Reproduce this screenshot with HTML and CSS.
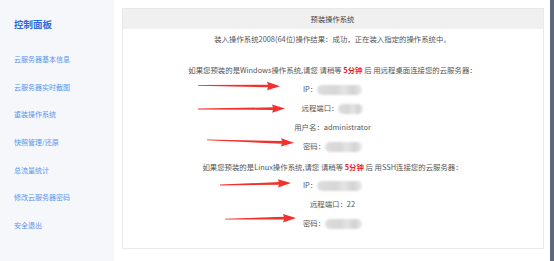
FILE: index.html
```html
<!DOCTYPE html>
<html lang="zh-CN">
<head>
    <meta charset="UTF-8">
    <title>预装操作系统</title>
    <link rel="stylesheet" href="styles.css">
</head>
<body>

    <div class="page">
        <div class="sidebar">
            <h2 class="side-title">控制面板</h2>
            <ul class="side-menu">
                <li><a href="#">云服务器基本信息</a></li>
                <li><a href="#">云服务器实时截图</a></li>
                <li><a href="#">重装操作系统</a></li>
                <li><a href="#">快照管理/还原</a></li>
                <li><a href="#">总流量统计</a></li>
                <li><a href="#">修改云服务器密码</a></li>
                <li><a href="#">安全退出</a></li>
            </ul>
        </div>

        <div class="main">
            <div class="panel">
                <div class="panel-head">预装操作系统</div>
                <div class="panel-body">
                    <p class="result">装入操作系统2008(64位)操作结果：成功，正在装入指定的操作系统中。</p>

                    <div class="os-block win">
                        <p>如果您预装的是Windows操作系统,请您 请稍等 <b class="hl">5分钟</b> 后 用远程桌面连接您的云服务器：</p>
                        <p>IP：<span class="mask ip"></span></p>
                        <p>远程端口：<span class="mask port"></span></p>
                        <p>用户名：administrator</p>
                        <p>密码：<span class="mask pwd"></span></p>
                    </div>

                    <div class="os-block linux">
                        <p class="os-intro">如果您预装的是Linux操作系统,请您 请稍等 <b class="hl">5分钟</b> 后 用SSH连接您的云服务器：</p>
                        <p>IP：<span class="mask ip"></span></p>
                        <p>远程端口：22</p>
                        <p>密码：<span class="mask pwd"></span></p>
                    </div>
                </div>
            </div>
        </div>

        <div class="frame-edge"></div>

        <!-- red arrows drawn over the screenshot -->
        <svg class="arrows" width="554" height="261" viewBox="0 0 554 261">
            <defs>
                <path id="arrow80" d="M0,-0.4 L70,-1.3 L69,-4.2 L82,0 L69,4.2 L70,1.3 L0,0.4 Z" />
                <path id="arrow86" d="M0,-0.4 L75,-1.3 L74,-4.2 L87,0 L74,4.2 L75,1.3 L0,0.4 Z" />
                <path id="arrow70" d="M0,-0.4 L59,-1.3 L58,-4.2 L71,0 L58,4.2 L59,1.3 L0,0.4 Z" />
            </defs>
            <use href="#arrow80" transform="translate(198,85.3) rotate(0.6)" />
            <use href="#arrow86" transform="translate(198,109) rotate(-0.3)" />
            <use href="#arrow86" transform="translate(207,139.8) rotate(2)" />
            <use href="#arrow70" transform="translate(220,185) rotate(-1.6)" />
            <use href="#arrow70" transform="translate(225,219.2) rotate(-1)" />
        </svg>
    </div>

</body>
</html>
```

FILE: styles.css
```css
* {
    margin: 0;
    padding: 0;
    box-sizing: border-box;
}

body {
    font-family: "Noto Sans CJK SC", "Noto Sans", sans-serif;
    background-color: #fff;
    color: #555;
}

.page {
    position: relative;
    display: flex;
    width: 554px;
    height: 261px;
    overflow: hidden;
}

.sidebar {
    width: 114px;
    flex: none;
    background-color: #f5f7fb;
    padding: 14px 0 0 14px;
}

    .side-title {
        font-size: 9.5px;
        line-height: 20px;
        font-weight: bold;
        color: #2a6ad4;
        margin-bottom: 8px;
    }

    .side-menu {
        list-style-type: none;
    }

        .side-menu li {
            height: 27.67px;
            line-height: 27.67px;
        }

            .side-menu li a {
                font-size: 7px;
                color: #5596ef;
                text-decoration: none;
            }

.main {
    flex: 1;
    padding: 8px 0 0 7.5px;
}

.panel {
    width: 422px;
    height: 241px;
    border: 1px solid #e9e9e9;
}

.panel-head {
    height: 20px;
    line-height: 20px;
    background-color: #f0f0f0;
    text-align: center;
    font-size: 7.3px;
    color: #444;
}

.panel-body {
    text-align: center;
    font-size: 7.4px;
}

    .panel-body p {
        line-height: 19px;
    }

.result {
    margin-bottom: 12px;
}

.os-block.linux {
    margin-top: 3px;
}

    .os-block.linux .os-intro {
        line-height: 17px;
    }

.hl {
    color: #f41a1a;
    font-weight: bold;
}

.mask {
    display: inline-block;
    height: 10px;
    vertical-align: middle;
    border-radius: 5px;
    background: linear-gradient(90deg, #dedede, #d6d6d6 40%, #e4e4e4 60%, #d2d2d2 80%, #e8e8e8);
    filter: blur(1px);
}

    .mask.ip {
        width: 45px;
    }

    .mask.port {
        width: 25px;
    }

    .mask.pwd {
        width: 37px;
    }

.frame-edge {
    width: 4px;
    margin-left: auto;
    background-color: #5b6a7b;
}

.arrows {
    position: absolute;
    top: 0;
    left: 0;
    pointer-events: none;
    fill: #f2302c;
}
```
